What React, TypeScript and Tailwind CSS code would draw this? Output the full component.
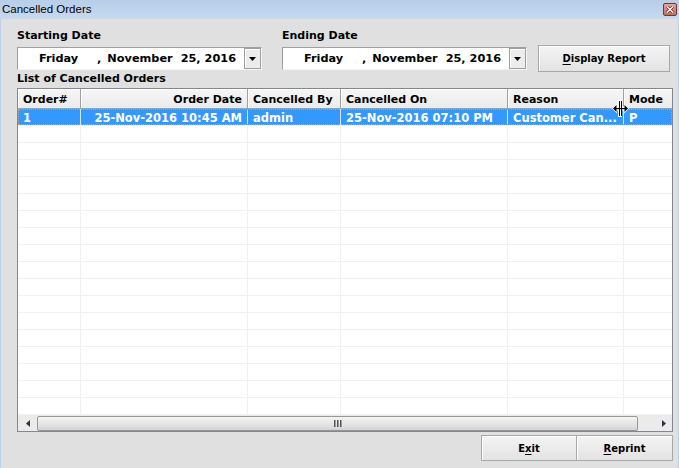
import React from 'react';

type Col = { w: string; head: string; data: string; right?: boolean; last?: boolean };

const cols: Col[] = [
  { w: 'w-[63px]', head: 'Order#', data: '1' },
  { w: 'w-[167px]', head: 'Order Date', data: '25-Nov-2016 10:45 AM', right: true },
  { w: 'w-[93px]', head: 'Cancelled By', data: 'admin' },
  { w: 'w-[167px]', head: 'Cancelled On', data: '25-Nov-2016 07:10 PM' },
  { w: 'w-[116px]', head: 'Reason', data: 'Customer Can...' },
  { w: 'w-[48px]', head: 'Mode', data: 'P', last: true },
];

function DateCombo() {
  return (
    <div className="flex h-[23px] w-[245px] border border-t-[#a0a0a0] border-l-[#a0a0a0] border-b-[#f4f4f4] border-r-[#f4f4f4] bg-white">
      <div className="flex flex-1 items-center whitespace-pre text-[11.3px] leading-[22px] text-black">
        <span className="inline-block w-[79px] pl-[21px]">Friday</span>
        <span>,</span>
        <span className="ml-[6px]">November</span>
        <span className="ml-[8px]">25, 2016</span>
      </div>
      <div className="flex h-[21px] w-[17px] items-center justify-center border border-[#a0a0a0] bg-[#ececec] shadow-[inset_1px_1px_0_#ffffff]">
        <svg width="7" height="4" viewBox="0 0 7 4">
          <path d="M0 0 H7 L3.5 4 Z" fill="#000" />
        </svg>
      </div>
    </div>
  );
}

function Cursor() {
  return (
    <svg width="17" height="17" viewBox="0 0 17 17" className="pointer-events-none absolute left-[594px] top-[11px]">
      <path
        d="M6 0 H10 V6.5 H12 V3.5 L17 8.5 L12 13.5 V10.5 H10 V17 H6 V10.5 H5 V13.5 L0 8.5 L5 3.5 V6.5 H6 Z"
        fill="#fff"
      />
      <rect x="7" y="1" width="1" height="15" fill="#000" />
      <rect x="9" y="1" width="1" height="15" fill="#000" />
      <rect x="3" y="8" width="11" height="1.2" fill="#000" />
      <path d="M1 8.5 L4.5 5 V12 Z" fill="#000" />
      <path d="M16 8.5 L12.5 5 V12 Z" fill="#000" />
    </svg>
  );
}

function WinButton({ children, className }: { children: React.ReactNode; className: string }) {
  return (
    <div
      className={
        'flex items-center justify-center border border-[#a8a8a8] bg-gradient-to-b from-[#f4f4f4] to-[#e3e3e3] text-[10px] font-bold text-black shadow-[inset_1px_1px_0_#ffffff] ' +
        className
      }
    >
      {children}
    </div>
  );
}

export default function App() {
  const emptyRows = Array.from({ length: 17 });
  return (
    <div className="flex h-[468px] w-[679px] flex-col overflow-hidden bg-[#e0e0e0] font-['DejaVu_Sans',sans-serif] text-[11px]">
      {/* Title bar */}
      <div className="flex h-[19px] items-center justify-between bg-gradient-to-b from-[#b7cee9] to-[#c6d9ef] pl-[2px] pr-[2px]">
        <span className="font-['Liberation_Sans',sans-serif] text-[11.5px] leading-[19px] text-black">Cancelled Orders</span>
        <div className="mb-[1px] flex h-[13px] w-[14px] items-center justify-center rounded-[2px] border border-[#6b3a34] bg-gradient-to-b from-[#e0a89e] to-[#c46a5c]">
          <svg width="8" height="7" viewBox="0 0 8 7">
            <path d="M1 0.5 L7 6.5 M7 0.5 L1 6.5" stroke="#4a2520" strokeWidth="2.6" />
            <path d="M1 0.5 L7 6.5 M7 0.5 L1 6.5" stroke="#ffffff" strokeWidth="1.4" />
          </svg>
        </div>
      </div>

      {/* Body */}
      <div className="flex flex-1 flex-col border-x border-[#bcd2ec] pl-[16px] pr-[5px] pt-[10px] font-bold text-black">
        <div className="flex items-start">
          <div className="flex w-[245px] flex-col">
            <div className="h-[14px] leading-[14px]">Starting Date</div>
            <div className="mt-[4px]">
              <DateCombo />
            </div>
          </div>
          <div className="ml-[20px] flex w-[245px] flex-col">
            <div className="h-[14px] leading-[14px]">Ending Date</div>
            <div className="mt-[4px]">
              <DateCombo />
            </div>
          </div>
          <WinButton className="ml-[11px] mt-[16px] h-[27px] w-[132px]">
            <span>
              <span className="underline underline-offset-2">D</span>isplay Report
            </span>
          </WinButton>
        </div>

        <div className="mb-[2px] h-[14px] leading-[14px]">List of Cancelled Orders</div>

        {/* Grid */}
        <div className="relative flex w-[656px] flex-col border border-[#828790] bg-white">
          <div className="flex h-[20px] border-b border-[#a0a0a0] bg-gradient-to-b from-[#f6f6f6] to-[#ebebeb]">
            {cols.map((c) => (
              <div
                key={c.head}
                className={
                  c.w +
                  ' h-[19px] px-[5px] pt-[2px] leading-[17px] whitespace-nowrap shadow-[inset_1px_1px_0_#ffffff] ' +
                  (c.last ? '' : 'border-r border-[#a0a0a0] ') +
                  (c.right ? 'text-right' : 'text-left')
                }
              >
                {c.head}
              </div>
            ))}
          </div>

          {/* Selected row */}
          <div className="relative flex h-[17px] border-b border-[#f0f0f0] bg-[#3399ff] text-[11.5px] text-white">
            {cols.map((c) => (
              <div
                key={c.head}
                className={
                  c.w +
                  ' h-[16px] overflow-hidden px-[5px] pt-[1px] leading-[16px] whitespace-nowrap ' +
                  (c.last ? '' : 'border-r border-[#d6e8fb] ') +
                  (c.right ? 'text-right' : 'text-left')
                }
              >
                {c.data}
              </div>
            ))}
            <div className="pointer-events-none absolute inset-0 border border-dotted border-[#e89a50]" />
          </div>

          {emptyRows.map((_, i) => (
            <div key={i} className="flex h-[17px] border-b border-[#f0f0f0]">
              {cols.map((c) => (
                <div key={c.head} className={c.w + ' h-[16px] ' + (c.last ? '' : 'border-r border-[#f0f0f0]')} />
              ))}
            </div>
          ))}

          {/* Horizontal scrollbar */}
          <div className="flex h-[16px] items-center bg-[#ebebeb]">
            <div className="flex h-[16px] w-[19px] items-center justify-center">
              <svg width="4" height="7" viewBox="0 0 4 7">
                <path d="M4 0 V7 L0 3.5 Z" fill="#333" />
              </svg>
            </div>
            <div className="flex h-[15px] w-[601px] items-center justify-center rounded-[2px] border border-[#979797] bg-gradient-to-b from-[#f4f4f4] via-[#e6e6e6] to-[#d4d4d4]">
              <svg width="8" height="7" viewBox="0 0 8 7">
                <rect x="0" y="0" width="1.5" height="7" fill="#555" />
                <rect x="3" y="0" width="1.5" height="7" fill="#555" />
                <rect x="6" y="0" width="1.5" height="7" fill="#555" />
              </svg>
            </div>
            <div className="flex-1" />
            <div className="flex h-[16px] w-[17px] items-center justify-center">
              <svg width="4" height="7" viewBox="0 0 4 7">
                <path d="M0 0 V7 L4 3.5 Z" fill="#333" />
              </svg>
            </div>
          </div>

          <Cursor />
        </div>

        {/* Bottom buttons */}
        <div className="mt-[3px] flex w-[656px] justify-end">
          <WinButton className="h-[26px] w-[96px]">
            <span>
              E<span className="underline underline-offset-2">x</span>it
            </span>
          </WinButton>
          <WinButton className="h-[26px] w-[96px] border-l-0">
            <span>
              <span className="underline underline-offset-2">R</span>eprint
            </span>
          </WinButton>
        </div>
      </div>
    </div>
  );
}
